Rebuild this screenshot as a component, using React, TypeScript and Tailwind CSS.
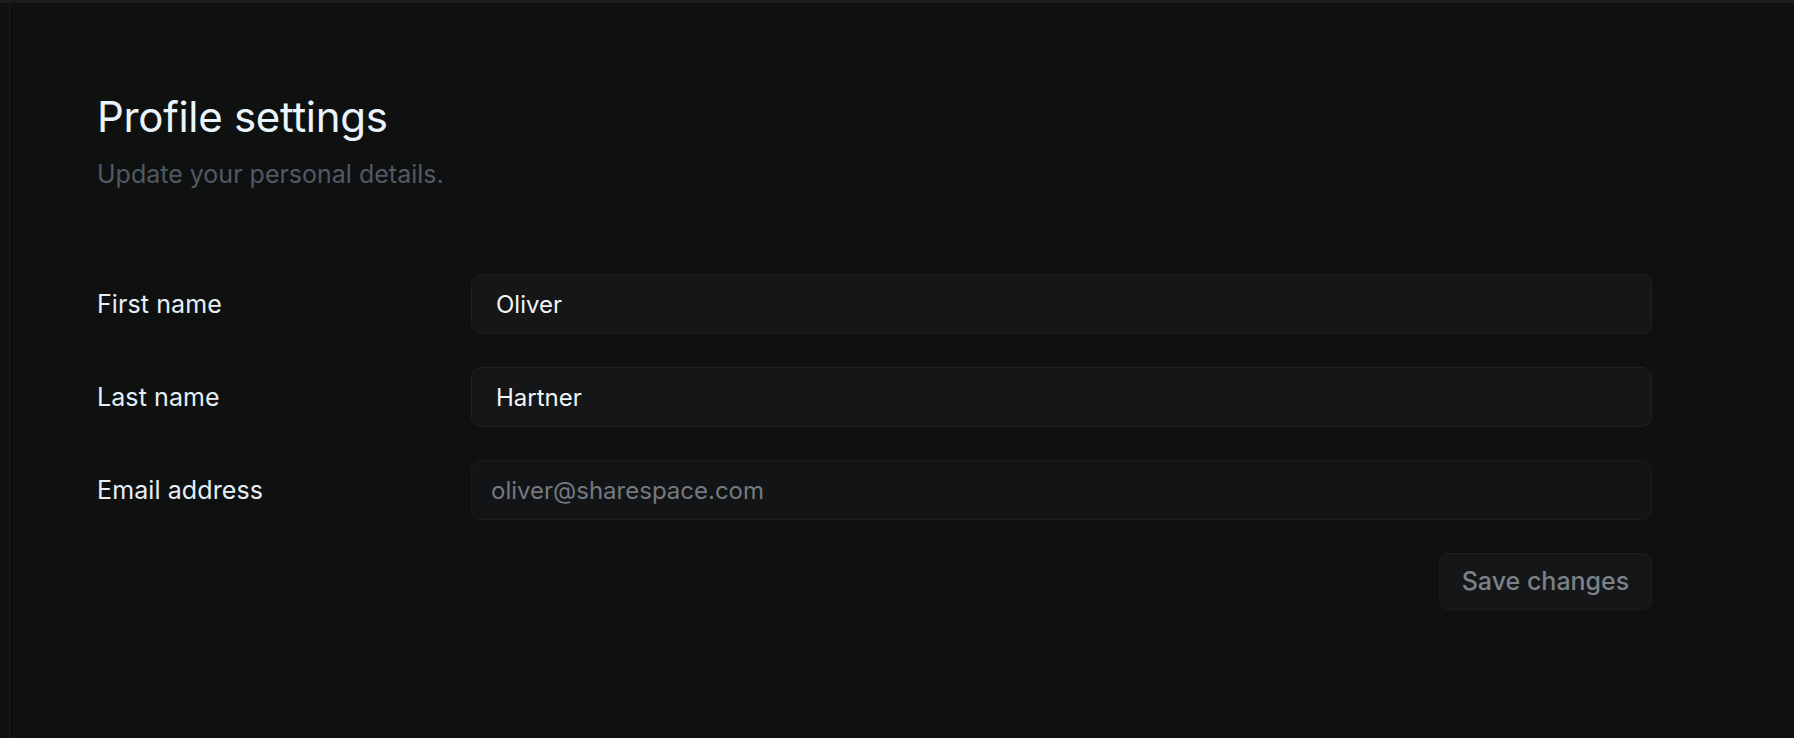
const fields = [
  { label: 'First name', value: 'Oliver' },
  { label: 'Last name', value: 'Hartner' },
]

export default function App() {
  return (
    <div
      className="flex h-[738px] w-full overflow-hidden border-t-[3px] border-[#1a1c1d] bg-[#0f1111]"
      style={{ fontFamily: 'Inter, "Noto Sans", sans-serif' }}
    >
      {/* collapsed sidebar edge */}
      <aside className="w-[10px] shrink-0 border-r border-[#1c1f20] bg-[#0f1111]" />

      <main className="flex-1 pl-[87px] pt-[89px]">
        <div className="w-[1555px]">
          <h1 className="text-[42px] leading-[50px] font-normal tracking-[-0.3px] text-[#eaf4fc]">
            Profile settings
          </h1>
          <p className="mt-4 text-[25px] leading-[32px] text-[#4f5a64]">
            Update your personal details.
          </p>

          <form className="mt-[84px] flex flex-col gap-[33px]">
            {fields.map((f) => (
              <div key={f.label} className="flex items-center">
                <label className="w-[374px] shrink-0 pt-[2px] text-[25px] font-normal tracking-[0.1px] text-[#e6eef6]">
                  {f.label}
                </label>
                <input
                  defaultValue={f.value}
                  className="h-[60px] flex-1 rounded-[10px] border border-[#1e2123] bg-[#141618] px-[24px] text-[24px] text-[#f2f4f5] outline-none"
                />
              </div>
            ))}
            <div className="flex items-center">
              <label className="w-[374px] shrink-0 pt-[2px] text-[25px] font-normal tracking-[0.1px] text-[#e6eef6]">
                Email address
              </label>
              <input
                disabled
                placeholder="oliver@sharespace.com"
                className="h-[60px] flex-1 rounded-[10px] border border-[#191c1d] bg-[#121415] px-[19px] text-[24px] text-[#737a80] placeholder:text-[#737a80] outline-none"
              />
            </div>

            <div className="flex justify-end">
              <button
                type="button"
                className="h-[57px] w-[213px] rounded-[10px] border border-[#1b1d1f] bg-[#141618] text-[25px] font-medium text-[#7b8187]"
              >
                Save changes
              </button>
            </div>
          </form>
        </div>
      </main>
    </div>
  )
}
